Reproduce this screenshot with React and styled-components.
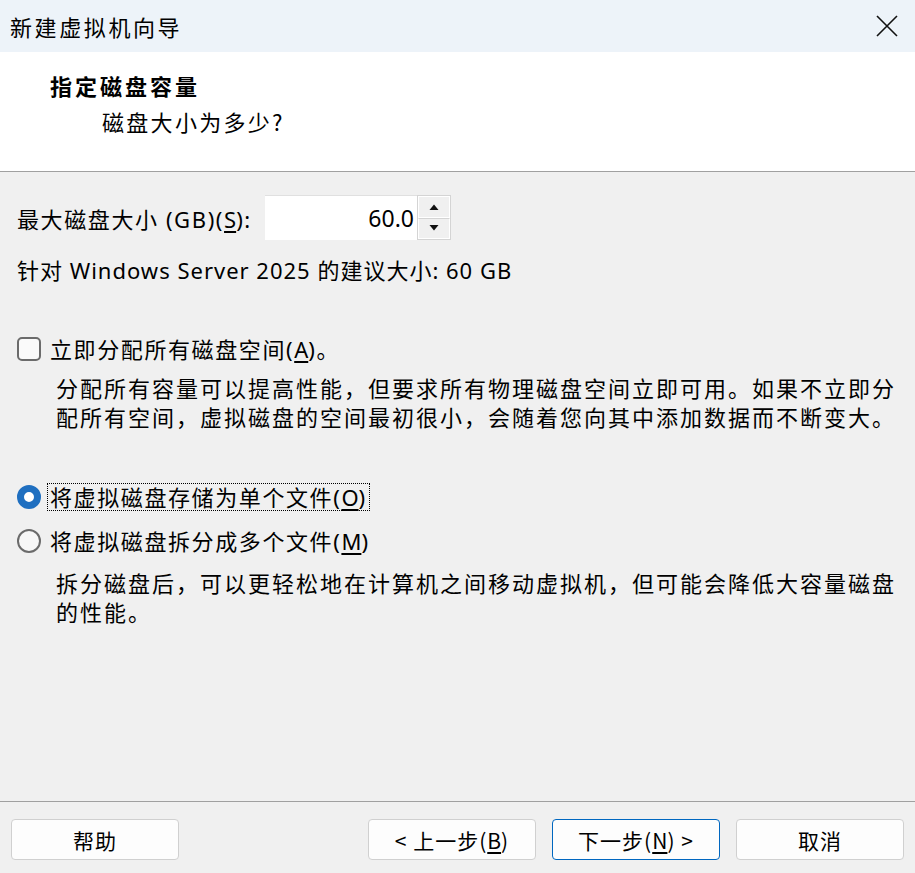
import React from "react";
import styled, { createGlobalStyle } from "styled-components";

const Global = createGlobalStyle`
  html, body { margin: 0; padding: 0; }
  body {
    font-family: "Noto Sans", "Noto Sans CJK SC", sans-serif;
    color: #000;
    background: #f0f0f0;
  }
`;

const Window = styled.div`
  width: 915px;
  height: 873px;
  display: flex;
  flex-direction: column;
  background: #f0f0f0;
  overflow: hidden;
`;

const TitleBar = styled.div`
  height: 52px;
  flex-shrink: 0;
  background: #edf3f9;
  display: flex;
  align-items: center;
  justify-content: space-between;
  padding: 0 16px 0 10px;
  box-sizing: border-box;
`;

const Title = styled.div`
  font-family: "Noto Sans CJK SC", sans-serif;
  font-size: 22px;
  letter-spacing: 2.6px;
`;

const Close = styled.div`
  width: 24px;
  height: 24px;
  display: flex;
  align-items: center;
  justify-content: center;
`;

const Header = styled.div`
  height: 120px;
  flex-shrink: 0;
  box-sizing: border-box;
  background: #fff;
  border-bottom: 1px solid #a0a0a0;
  padding: 17px 0 0 50px;
`;

const HeaderTitle = styled.div`
  font-family: "Noto Sans CJK SC", sans-serif;
  font-size: 22px;
  font-weight: 700;
  letter-spacing: 3px;
  line-height: 32px;
`;

const HeaderSub = styled.div`
  font-family: "Noto Sans CJK SC", sans-serif;
  font-size: 22px;
  letter-spacing: 2.3px;
  line-height: 32px;
  margin: 4px 0 0 52px;
`;

const Body = styled.div`
  flex: 1;
  padding: 23px 0 0 17px;
  font-size: 22px;
`;

const SizeRow = styled.div`
  display: flex;
  align-items: center;
  height: 45px;
`;

const Label = styled.span`
  width: 248px;
  letter-spacing: 1.6px;
  white-space: nowrap;
`;

const Input = styled.div`
  width: 152px;
  height: 45px;
  background: #fff;
  border-top: 1px solid #e0e0e0;
  box-sizing: border-box;
  display: flex;
  align-items: center;
  justify-content: flex-end;
  padding-right: 3px;
  font-size: 23px;
`;

const Spin = styled.div`
  width: 34px;
  height: 45px;
  display: flex;
  flex-direction: column;
  border: 1px solid #d4d4d4;
  box-sizing: border-box;
  background: #f0f0f0;
`;

const SpinBtn = styled.div`
  flex: 1;
  display: flex;
  align-items: center;
  justify-content: center;
  border: 1px solid #fff;
  & + & { border-top: 1px solid #d4d4d4; }
`;

const Hint = styled.div`
  margin-top: 15px;
  line-height: 30px;
  letter-spacing: 1px;
  white-space: nowrap;
`;

const Option = styled.div`
  display: flex;
  align-items: center;
  gap: 8px;
  height: 30px;
  margin-top: ${({ $mt }) => $mt}px;
  letter-spacing: 1.6px;
`;

const Check = styled.span`
  width: 24px;
  height: 24px;
  box-sizing: border-box;
  border: 2px solid #6b6b6b;
  border-radius: 5px;
  background: #fafafa;
  flex-shrink: 0;
`;

const Radio = styled.span`
  width: 24px;
  height: 24px;
  box-sizing: border-box;
  border-radius: 50%;
  flex-shrink: 0;
  border: ${({ $on }) => ($on ? "7px solid #1f6fc0" : "2px solid #6b6b6b")};
  background: ${({ $on }) => ($on ? "#fff" : "#f7f7f7")};
`;

const OptText = styled.span`
  padding: 0 2px;
  margin-left: -2px;
  line-height: 26px;
  border: 1px dotted ${({ $focus }) => ($focus ? "#000" : "transparent")};
`;

const Desc = styled.div`
  margin: ${({ $mt }) => $mt}px 0 0 39px;
  width: 850px;
  line-height: 29px;
  letter-spacing: 2px;
`;

const U = styled.span`
  text-decoration: underline;
  text-underline-offset: 3px;
  letter-spacing: 0;
`;

const Footer = styled.div`
  height: 72px;
  flex-shrink: 0;
  box-sizing: border-box;
  border-top: 1px solid #a0a0a0;
  display: flex;
  align-items: flex-start;
  padding: 17px 11px 0;
  gap: 16px;
`;

const Spacer = styled.div`
  flex: 1;
`;

const Button = styled.div`
  width: 168px;
  height: 41px;
  box-sizing: border-box;
  background: #fdfdfd;
  border: 1px solid ${({ $primary }) => ($primary ? "#0067c0" : "#d0d0d0")};
  border-radius: 4px;
  display: flex;
  align-items: center;
  justify-content: center;
  font-family: "Noto Sans CJK SC", sans-serif;
  font-size: 21px;
  letter-spacing: 1px;
`;

const Tri = ({ up }) => (
  <svg width="12" height="8" viewBox="0 0 12 8">
    <path d={up ? "M1.5 7 L6 1.5 L10.5 7 Z" : "M1.5 1 L6 6.5 L10.5 1 Z"} fill="#111" />
  </svg>
);

export default function App() {
  return (
    <Window>
      <Global />
      <TitleBar>
        <Title>新建虚拟机向导</Title>
        <Close>
          <svg width="22" height="22" viewBox="0 0 22 22">
            <path d="M1 1 L21 21 M21 1 L1 21" stroke="#111" strokeWidth="1.6" />
          </svg>
        </Close>
      </TitleBar>
      <Header>
        <HeaderTitle>指定磁盘容量</HeaderTitle>
        <HeaderSub>磁盘大小为多少?</HeaderSub>
      </Header>
      <Body>
        <SizeRow>
          <Label>
            最大磁盘大小 (GB)(<U>S</U>):
          </Label>
          <Input>60.0</Input>
          <Spin>
            <SpinBtn>
              <Tri up />
            </SpinBtn>
            <SpinBtn>
              <Tri />
            </SpinBtn>
          </Spin>
        </SizeRow>
        <Hint>针对 Windows Server 2025 的建议大小: 60 GB</Hint>
        <Option $mt={49}>
          <Check />
          <OptText>
            立即分配所有磁盘空间(<U>A</U>)。
          </OptText>
        </Option>
        <Desc $mt={10}>
          分配所有容量可以提高性能，但要求所有物理磁盘空间立即可用。如果不立即分配所有空间，虚拟磁盘的空间最初很小，会随着您向其中添加数据而不断变大。
        </Desc>
        <Option $mt={50}>
          <Radio $on />
          <OptText $focus>
            将虚拟磁盘存储为单个文件(<U>O</U>)
          </OptText>
        </Option>
        <Option $mt={14}>
          <Radio />
          <OptText>
            将虚拟磁盘拆分成多个文件(<U>M</U>)
          </OptText>
        </Option>
        <Desc $mt={13}>
          拆分磁盘后，可以更轻松地在计算机之间移动虚拟机，但可能会降低大容量磁盘的性能。
        </Desc>
      </Body>
      <Footer>
        <Button>帮助</Button>
        <Spacer />
        <Button>
          &lt; 上一步(<U>B</U>)
        </Button>
        <Button $primary>
          下一步(<U>N</U>) &gt;
        </Button>
        <Button>取消</Button>
      </Footer>
    </Window>
  );
}
